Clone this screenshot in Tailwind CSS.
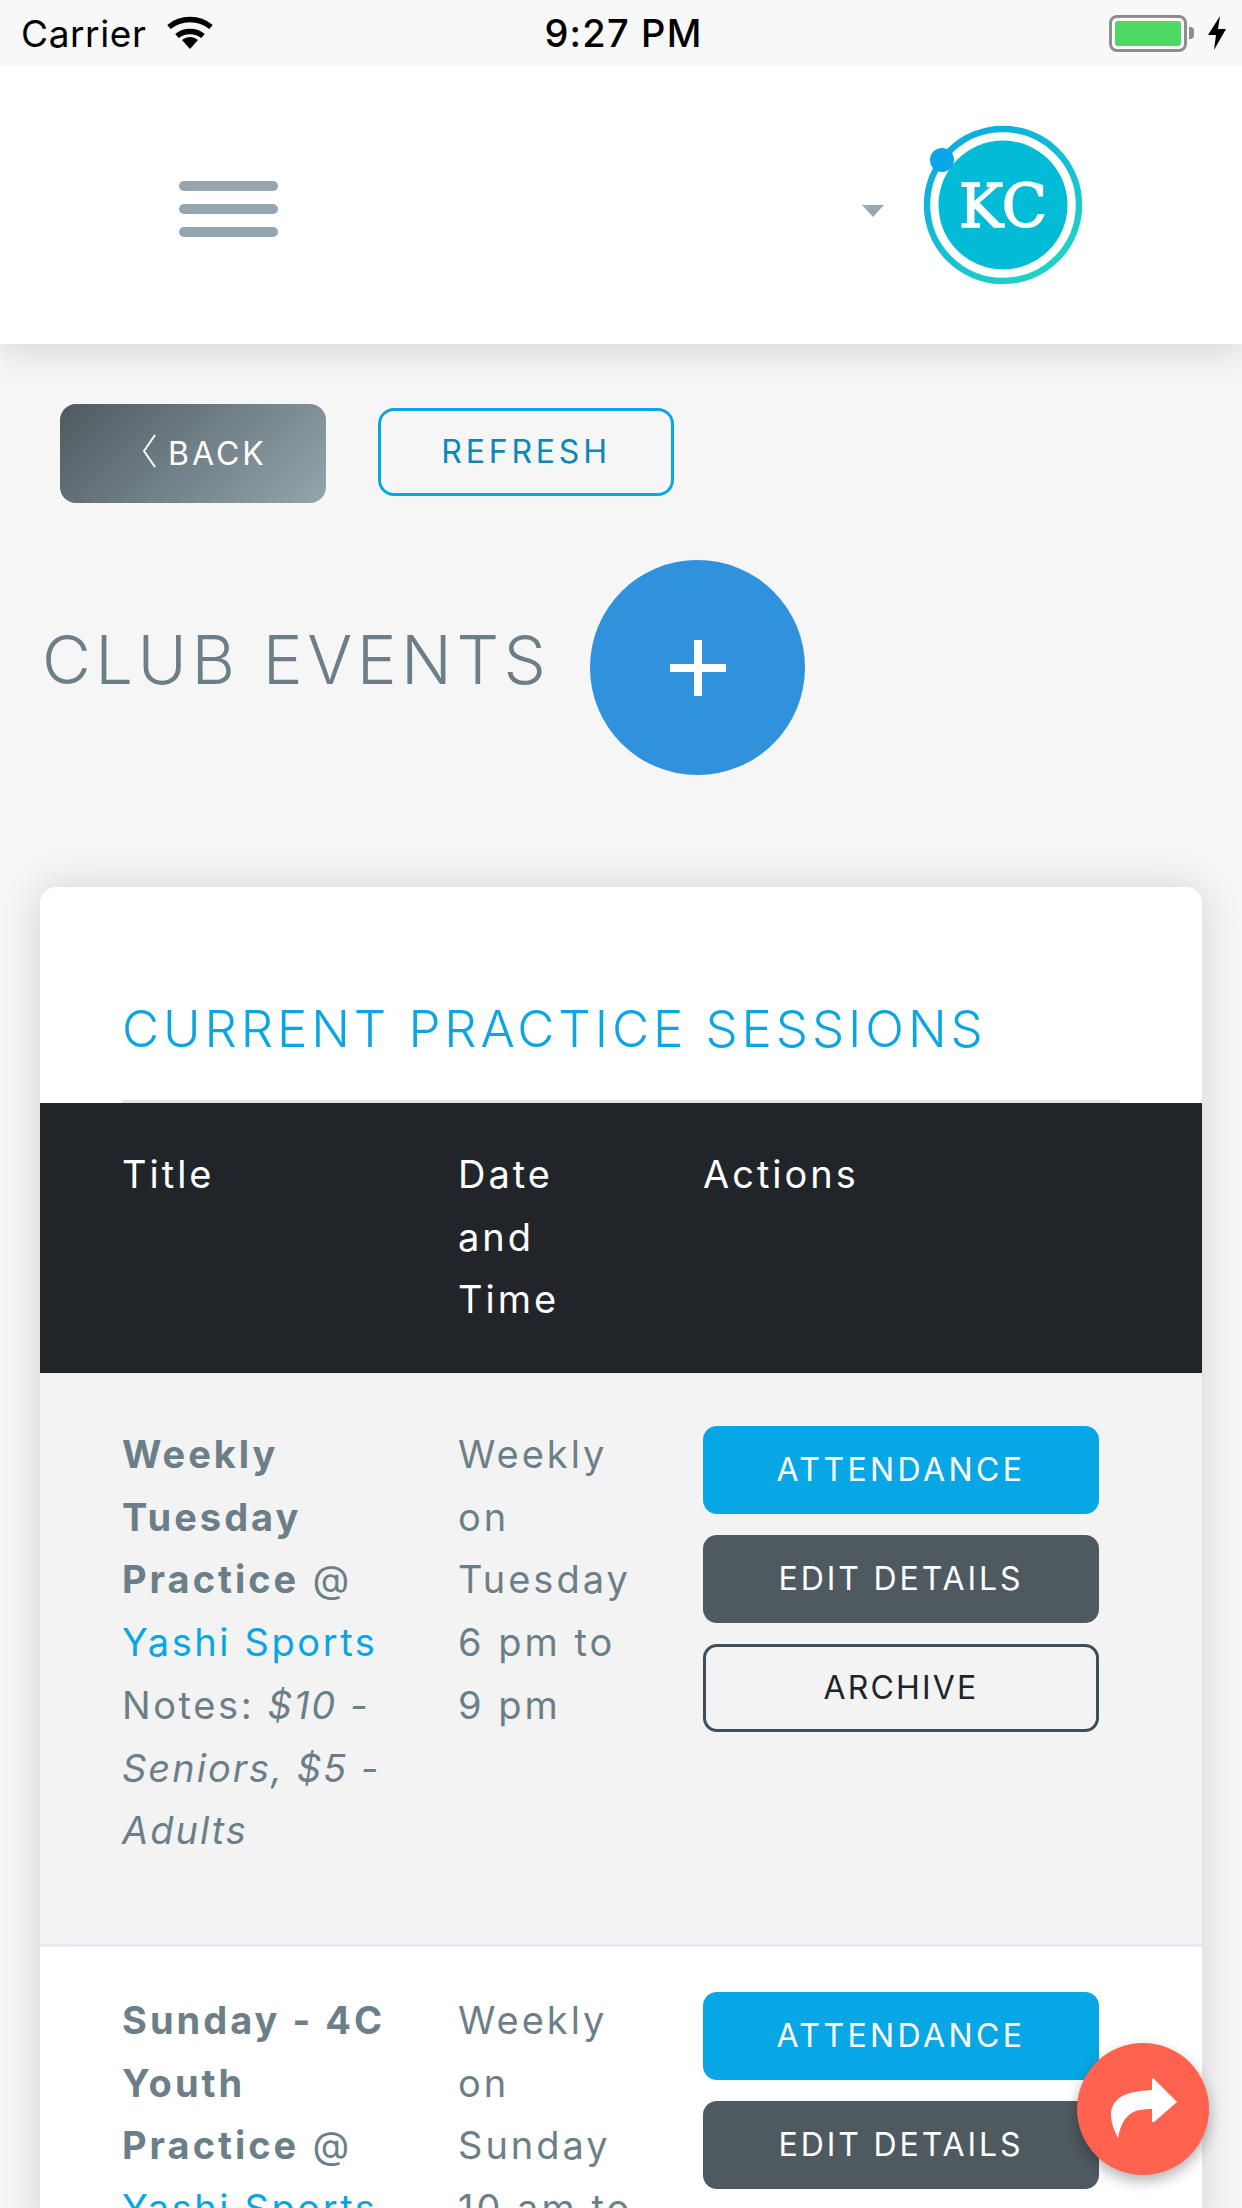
<!DOCTYPE html>
<html lang="en">
<head>
    <meta charset="UTF-8">
    <title>Club Events</title>
    <script src="https://cdn.jsdelivr.net/npm/@tailwindcss/browser@4"></script>
</head>
<body class="relative h-[2208px] w-[1242px] overflow-hidden bg-[#f6f6f6] font-['Inter',sans-serif]">

    <!-- Status bar -->
    <div class="relative z-20 flex h-[66px] items-center justify-between bg-[#f8f8f8] pl-[21px] pr-[16px] text-[#000]">
        <div class="flex w-[300px] items-center gap-[21px]">
            <span class="text-[37px] leading-none tracking-[0.6px]">Carrier</span>
            <svg class="h-[34px] w-[46px]" viewBox="0 0 46 34" fill="none" stroke="#000" stroke-width="5.5">
                <path d="M2 11 C14 1 32 1 44 11"/>
                <path d="M10 20 C17 14 29 14 36 20"/>
                <path d="M15 24 L23 33 L31 24 C26 20 20 20 15 24 Z" fill="#000" stroke="none"/>
            </svg>
        </div>
        <span class="text-[38px] font-medium leading-none tracking-[1.2px]">9:27 PM</span>
        <div class="flex w-[300px] items-center justify-end gap-[14px]">
            <div class="flex items-center gap-[2px]">
                <div class="h-[37px] w-[78px] rounded-[8px] border-[3px] border-[#8e8e8e] bg-white p-[3px]">
                    <div class="h-full w-full rounded-[3px] bg-[#4cd964]"></div>
                </div>
                <div class="h-[12px] w-[5px] rounded-r-[4px] bg-[#8e8e8e]"></div>
            </div>
            <svg class="h-[34px] w-[18px]" viewBox="0 0 18 34" fill="#000"><path d="M12 0 L0 19 L8 19 L6 34 L18 13 L10 13 Z"/></svg>
        </div>
    </div>

    <!-- Header -->
    <header class="relative z-10 flex h-[278px] items-center bg-white pl-[179px] shadow-[0_6px_36px_rgba(0,0,0,0.14)]">
        <div class="mt-[7px] flex w-[99px] flex-col gap-[13px]">
            <div class="h-[10px] rounded-full bg-[#96a6b0]"></div>
            <div class="h-[10px] rounded-full bg-[#96a6b0]"></div>
            <div class="h-[10px] rounded-full bg-[#96a6b0]"></div>
        </div>
        <div class="ml-[584px] mt-[12px] h-0 w-0 border-x-[11px] border-t-[12px] border-x-transparent border-t-[#99a8b2]"></div>
        <svg class="ml-[34px] h-[170px] w-[170px]" viewBox="0 0 170 170">
            <defs>
                <linearGradient id="ring" x1="0" y1="0" x2="0.7" y2="1">
                    <stop offset="0" stop-color="#0aa5e6"/>
                    <stop offset="1" stop-color="#1fd2c8"/>
                </linearGradient>
            </defs>
            <circle cx="85" cy="85" r="76" fill="none" stroke="url(#ring)" stroke-width="6.5"/>
            <circle cx="85" cy="85" r="64.5" fill="#02bbd6"/>
            <circle cx="24" cy="40" r="12" fill="#0aa5e8"/>
            <text x="85" y="107" text-anchor="middle" fill="#fff" stroke="#fff" stroke-width="1.6" font-family="DejaVu Serif, serif" font-size="60" textLength="88" lengthAdjust="spacingAndGlyphs">KC</text>
        </svg>
    </header>

    <!-- Back / refresh -->
    <div class="flex items-center gap-[52px] pl-[60px] pt-[60px]">
        <a class="flex h-[99px] w-[266px] items-center gap-[12px] rounded-[16px] bg-[linear-gradient(135deg,#4f5a60,#94a5ad)] pl-[82px] text-[32px] text-white">
            <svg class="mb-[6px] h-[34px] w-[14px]" viewBox="0 0 14 34" fill="none" stroke="#fff" stroke-width="2"><path d="M13 1 L2 17 L13 33"/></svg>
            <span class="tracking-[3px]">BACK</span>
        </a>
        <a class="mb-[3px] flex h-[88px] w-[296px] items-center justify-center rounded-[16px] border-[3px] border-[#0aa5e3] text-[32px] tracking-[3.8px] text-[#0e86b6]">REFRESH</a>
    </div>

    <!-- Page title -->
    <div class="mt-[57px] flex items-center pl-[42px]">
        <h1 class="mb-[16px] w-[548px] text-[67px] font-light leading-none tracking-[4.5px] text-[#6c7f89]">CLUB EVENTS</h1>
        <div class="flex h-[215px] w-[215px] items-center justify-center rounded-full bg-[#3091dd]">
            <svg class="h-[56px] w-[56px]" viewBox="0 0 56 56" fill="#fff"><path d="M24 0 H32 V24 H56 V32 H32 V56 H24 V32 H0 V24 H24 Z"/></svg>
        </div>
    </div>

    <!-- Card -->
    <section class="mx-[40px] mt-[112px] overflow-hidden rounded-t-[16px] bg-white shadow-[0_0_40px_rgba(0,0,0,0.14)]">
        <div class="mx-[82px] flex h-[216px] items-center border-b-[3px] border-[#e6e6e6] pt-[72px]">
            <h2 class="text-[51px] font-light tracking-[3.9px] text-[#0aa5e3]">CURRENT PRACTICE SESSIONS</h2>
        </div>

        <div class="flex h-[270px] bg-[#212529] pl-[82px] pt-[40px] text-[38px] leading-[62.7px] tracking-[3px] text-white">
            <div class="w-[336px]">Title</div>
            <div class="w-[245px]">Date<br>and<br>Time</div>
            <div>Actions</div>
        </div>

        <!-- Row 1 -->
        <div class="flex h-[574px] border-b-[3px] border-[#e9ecef] bg-[#f3f3f3] pl-[82px] pt-[50px] text-[38px] leading-[62.7px] tracking-[2.6px] text-[#6c7f89]">
            <div class="w-[336px]">
                <strong class="font-bold tracking-[3px]">Weekly<br>Tuesday<br>Practice</strong> @<br>
                <span class="text-[#0aa5e3]">Yashi Sports</span><br>
                Notes: <em class="tracking-[2px]">$10 -<br>Seniors, $5 -<br>Adults</em>
            </div>
            <div class="w-[245px] tracking-[3px]">Weekly<br>on<br>Tuesday<br>6 pm to<br>9 pm</div>
            <div class="mt-[3px] flex w-[396px] flex-col gap-[21px]">
                <a class="flex h-[88px] items-center justify-center rounded-[14px] bg-[#07a7e5] text-[32px] tracking-[3.4px] text-white">ATTENDANCE</a>
                <a class="flex h-[88px] items-center justify-center rounded-[14px] bg-[#4f5a60] text-[32px] tracking-[2.9px] text-white">EDIT DETAILS</a>
                <a class="flex h-[88px] items-center justify-center rounded-[14px] border-[3px] border-[#3f4f5a] text-[32px] tracking-[2.2px] text-[#212529]">ARCHIVE</a>
            </div>
        </div>

        <!-- Row 2 -->
        <div class="flex bg-white pl-[82px] pt-[42px] text-[38px] leading-[62.7px] tracking-[2.6px] text-[#6c7f89]">
            <div class="w-[336px]">
                <strong class="font-bold tracking-[3px]">Sunday - 4C<br>Youth<br>Practice</strong> @<br>
                <span class="text-[#0aa5e3]">Yashi Sports</span>
            </div>
            <div class="w-[245px] tracking-[3px]">Weekly<br>on<br>Sunday<br>10 am to</div>
            <div class="mt-[3px] flex w-[396px] flex-col gap-[21px]">
                <a class="flex h-[88px] items-center justify-center rounded-[14px] bg-[#07a7e5] text-[32px] tracking-[3.4px] text-white">ATTENDANCE</a>
                <a class="flex h-[88px] items-center justify-center rounded-[14px] bg-[#4f5a60] text-[32px] tracking-[2.9px] text-white">EDIT DETAILS</a>
            </div>
        </div>
    </section>

    <!-- Floating share button -->
    <div class="absolute left-[1077px] top-[2043px] flex h-[132px] w-[132px] items-center justify-center rounded-full bg-[#ff6350] shadow-[0_6px_14px_rgba(0,0,0,0.3)]">
        <svg class="h-[62px] w-[68px]" viewBox="0 0 68 62" fill="#fff"><path d="M44 0 L68 24 L45 44 L43 44 L43 31 C26 31 14 34 9 60 C2 46 -2 32 8 22 C16 14 30 13 43 12 L43 1 Z"/></svg>
    </div>

</body>
</html>
